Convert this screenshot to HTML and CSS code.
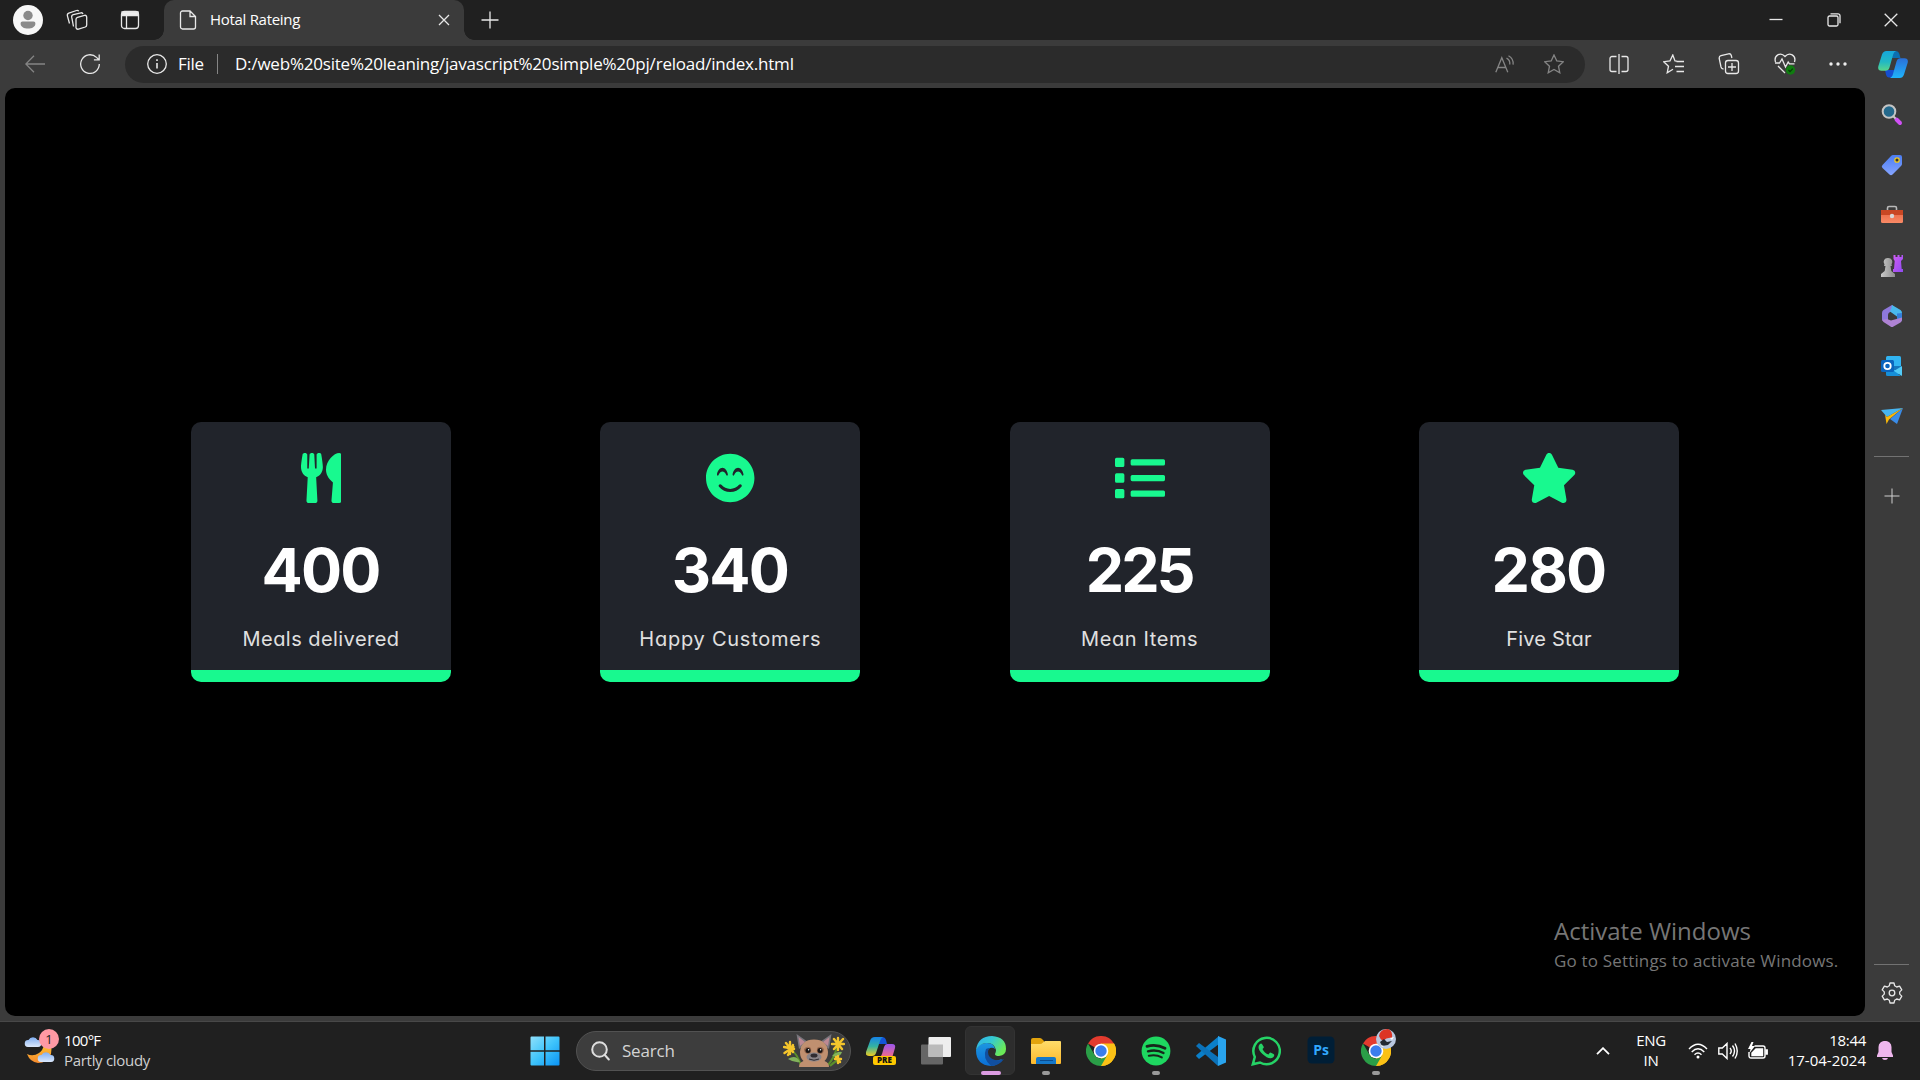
FILE: index.html
```html
<!DOCTYPE html>
<html lang="en">
<head>
<meta charset="utf-8">
<title>Hotal Rateing</title>
<link rel="stylesheet" href="styles.css">
</head>
<body>
<svg class="defs" width="0" height="0">
  <defs>
    <linearGradient id="g-win" x1="0" y1="0" x2="1" y2="1"><stop offset="0" stop-color="#8fe0fb"/><stop offset=".5" stop-color="#3fc4fb"/><stop offset="1" stop-color="#0a93f5"/></linearGradient>
    <linearGradient id="g-teal" x1="0" y1="0" x2="0" y2="1"><stop offset="0" stop-color="#16a6dc"/><stop offset=".55" stop-color="#22b8c4"/><stop offset="1" stop-color="#59d68a"/></linearGradient>
    <linearGradient id="g-blue" x1="0" y1="0" x2="0" y2="1"><stop offset="0" stop-color="#2a6fd8"/><stop offset="1" stop-color="#1fb4fb"/></linearGradient>
    <linearGradient id="g-pre1" x1="0" y1="0" x2="0" y2="1"><stop offset="0" stop-color="#1684e8"/><stop offset=".5" stop-color="#35b3a0"/><stop offset="1" stop-color="#f0cd20"/></linearGradient>
    <linearGradient id="g-pre2" x1="0" y1="0" x2="0" y2="1"><stop offset="0" stop-color="#9a55ee"/><stop offset="1" stop-color="#fb6e7c"/></linearGradient>
    <linearGradient id="g-tag" x1="0" y1="0" x2="0" y2="1"><stop offset="0" stop-color="#4b7df2"/><stop offset="1" stop-color="#86a5ff"/></linearGradient>
    <linearGradient id="g-box" x1="0" y1="0" x2="0" y2="1"><stop offset="0" stop-color="#e8623f"/><stop offset="1" stop-color="#f98a66"/></linearGradient>
    <linearGradient id="g-rook" x1="0" y1="0" x2="1" y2="1"><stop offset="0" stop-color="#d15cf5"/><stop offset="1" stop-color="#8f4cf0"/></linearGradient>
    <linearGradient id="g-pawn" x1="0" y1="0" x2="1" y2="0"><stop offset="0" stop-color="#c9c9c9"/><stop offset="1" stop-color="#8c8c8c"/></linearGradient>
    <linearGradient id="g-edge1" x1="0" y1="0" x2="1" y2=".5"><stop offset="0" stop-color="#2fb0ec"/><stop offset=".5" stop-color="#35c9d2"/><stop offset="1" stop-color="#6bea58"/></linearGradient>
    <linearGradient id="g-edge2" x1="0" y1="0" x2="0" y2="1"><stop offset="0" stop-color="#1c96e0"/><stop offset="1" stop-color="#0b6fd6"/></linearGradient>
    <linearGradient id="g-folder" x1="0" y1="0" x2="0" y2="1"><stop offset="0" stop-color="#ffdd6a"/><stop offset="1" stop-color="#fdb92c"/></linearGradient>
    <linearGradient id="g-moon" x1="0" y1="0" x2="0" y2="1"><stop offset="0" stop-color="#ffc030"/><stop offset="1" stop-color="#f58a2e"/></linearGradient>
    <linearGradient id="g-cloud" x1="0" y1="0" x2="0" y2="1"><stop offset="0" stop-color="#7faef2"/><stop offset="1" stop-color="#dce9fc"/></linearGradient>
    <g id="chrome">
      <path fill="#e33b2e" d="M15 15 2 7.500A15 15 0 0 1 28 7.500Z"/>
      <path fill="#fbc116" d="M15 15 28 7.500A15 15 0 0 1 15 30Z"/>
      <path fill="#fbc116" d="M15 7.500H28A15 15 0 0 1 15 30L21.500 18.800Z"/>
      <path fill="#2a9e47" d="M2 7.500A15 15 0 0 0 15 30L21.500 18.800A7.500 7.500 0 0 1 8.500 18.800Z"/>
      <circle cx="15" cy="15" r="7.300" fill="#fff"/><circle cx="15" cy="15" r="5.700" fill="#3b7ded"/>
    </g>
    <path id="cloud" d="M4 11a3.500 3.500 0 0 1 .5-7A5 5 0 0 1 13.500 4 3.500 3.500 0 0 1 14 11Z"/>
  </defs>
</svg>

<header class="tabbar">
  <svg class="avatar" viewBox="0 0 30 30" width="30" height="30"><circle cx="15" cy="15" r="15" fill="#f7f7f7"/><circle cx="15" cy="10.500" r="4.700" fill="#8a8a8a"/><path fill="#8a8a8a" d="M9.500 16.500h11c1.200 0 1.900.8 1.900 1.900 0 3.300-3.400 5.200-7.400 5.200s-7.400-1.900-7.400-5.200c0-1.100.7-1.900 1.900-1.900Z"/></svg>
  <svg class="line" viewBox="0 0 22 22" width="22" height="22"><path d="M11.500 8.300 18.500 6.300Q20.300 6 20.700 7.800V16Q20.700 17.500 19.300 18L12.500 20.200Q10.600 20.600 10 18.800V10.300Q10 8.800 11.500 8.300Z"/><path d="M7.500 17.500 5.700 8.200Q5.400 6.200 7.300 5.700L15 3.800Q16.500 3.500 17 5M3.500 14.500 1.400 6.800Q1 4.800 2.800 4.200L10.500 1.500Q12 1 12.700 2.300"/></svg>
  <svg class="line" viewBox="0 0 20 20" width="20" height="20"><rect x="1.500" y="1.500" width="17" height="17" rx="3"/><path d="M6.500 5v13"/><path fill="#eee" d="M2 2h16v3.500H2z"/></svg>
  <div class="tab">
    <svg class="line" viewBox="0 0 18 20" width="18" height="20"><path d="M3.500 1H11l5.500 5.500V17a2 2 0 0 1-2 2h-11a2 2 0 0 1-2-2V3a2 2 0 0 1 2-2ZM11 1v5.500h5.500"/></svg>
    <span class="tab-title">Hotal Rateing</span>
    <svg class="line" viewBox="0 0 12 12" width="12" height="12"><path d="m1 1 10 10M11 1 1 11"/></svg>
  </div>
  <svg class="line new-tab" viewBox="0 0 18 18" width="18" height="18"><path d="M9 .5v17M.5 9h17"/></svg>
  <div class="window-buttons">
    <svg class="line" viewBox="0 0 14 14" width="14" height="14"><path d="M.5 6.500h13"/></svg>
    <svg class="line" viewBox="0 0 14 14" width="14" height="14"><rect x="1" y="3" width="10" height="10" rx="1.500"/><path d="M3.500.8H11a2 2 0 0 1 2 2v7.500"/></svg>
    <svg class="line" viewBox="0 0 14 14" width="14" height="14"><path d="m.7.7 12.600 12.600M13.300.7.7 13.300"/></svg>
  </div>
</header>

<nav class="toolbar">
  <svg class="line dim" viewBox="0 0 20 18" width="20" height="18"><path d="M20 9H1M9 .8.8 9 9 17.200"/></svg>
  <svg class="line reload" viewBox="0 0 20 20" width="20" height="20"><path d="M19.300 10A9.300 9.300 0 1 1 16.500 3.400L19 5.700M19.200.5v5.300h-5.300"/></svg>
  <div class="address">
    <svg class="line" viewBox="0 0 20 20" width="20" height="20"><circle cx="10" cy="10" r="9.300"/><path stroke-width="1.600" d="M10 9v5.500M10 5.200v1.700"/></svg>
    <span class="scheme">File</span>
    <i class="pipe"></i>
    <span class="url">D:/web%20site%20leaning/javascript%20simple%20pj/reload/index.html</span>
    <svg class="line dim" viewBox="0 0 20 18" width="20" height="18"><path d="m.8 17.200 6-14.500 6 14.500M3 12.500h8M11.500 3.200q3.800 2 3.300 6.300M13.500.8q5.300 3 4.600 8.900"/></svg>
    <svg class="line dim" viewBox="0 0 20 20" width="20" height="20"><path d="m10 .9 2.800 6 6.500.8-4.800 4.500 1.300 6.600-5.800-3.300-5.800 3.300 1.300-6.600L.7 7.700l6.500-.8Z"/></svg>
  </div>
  <div class="tools">
    <svg class="line" viewBox="0 0 20 20" width="20" height="20"><path d="M10 0v20M7.500 2.500H3a2 2 0 0 0-2 2v11a2 2 0 0 0 2 2h4.500M12.500 2.500H17a2 2 0 0 1 2 2v11a2 2 0 0 1-2 2h-4.500"/></svg>
    <svg class="line" viewBox="0 0 22 20" width="22" height="20"><path d="m10 15.300-5.800 3.500 1.300-6.600L.7 7.700l6.300-.8L9.800 1 12 6.900l2 .3M13.500 7.500H21M12 12.500h9M13.500 17.500H21"/></svg>
    <svg class="line" viewBox="0 0 22 22" width="22" height="22"><rect x="7.500" y="7.500" width="13" height="13" rx="2.500"/><path d="M14 10v8M10 14h8M5.500 16q-2 0-2.500-2L1.200 5.500q-.3-2.200 1.800-2.800l7.500-1.900q2.200-.4 2.800 1.700l.6 2.500"/></svg>
    <svg class="line" viewBox="0 0 22 22" width="22" height="22"><path d="M1.500 9C-.5 2.500 6.500-1.500 11 3.500 15.500-1.500 22.500 2.500 20.500 9M1 10h4.500l2.500-4 3.500 8 2.700-5 1.300 1.800h5M4 13l7 7"/><circle cx="16.500" cy="17" r="4.700" fill="#107c10" stroke="none"/><path stroke="#063d06" d="m14.500 17 1.500 1.600 2.800-3"/></svg>
    <svg viewBox="0 0 18 4" width="18" height="4" fill="#eee"><circle cx="2" cy="2" r="1.700"/><circle cx="9" cy="2" r="1.700"/><circle cx="16" cy="2" r="1.700"/></svg>
  </div>
  <svg class="copilot" viewBox="0 0 30 27" width="30" height="27"><path fill="#154fd0" d="M7 19h10l-3 7.500h-3q-2.300 0-3-3Z"/><path fill="#0b6fb0" d="M13 0h5q2.500 0 3.300 2.800L22.500 7H13Z"/><path fill="url(#g-teal)" d="M8.500 0H18q-2 .8-2.700 3L11.500 16.500Q10.500 19.800 7.500 19.800H3.500Q-.8 19.800.4 15L4 3.500Q5.200 0 8.500 0Z"/><path fill="url(#g-blue)" d="M21.500 27H12q2-.8 2.700-3L18.500 10.500q1-3.300 4-3.300h4q4.300 0 3.100 4.800L26 23.500q-1.200 3.500-4.500 3.500Z"/></svg>
</nav>

<div class="browser-body">
  <main class="page">
    <div class="counters">
      <section class="card">
        <svg class="card-icon" viewBox="0 0 416 512"><path d="M207.900 15.200c.8 4.700 16.100 94.500 16.100 128.800 0 52.300-27.800 89.600-68.900 104.600L168 486.700c.7 13.700-10.200 25.300-24 25.300H80c-13.700 0-24.700-11.500-24-25.300l12.900-238.100C27.700 233.600 0 196.200 0 144 0 109.600 15.300 19.900 16.100 15.200 19.300-5.100 61.400-5.400 64 16.300v141.200c1.300 3.400 15.100 3.200 16 0 1.400-25.300 7.900-139.200 8-141.800 3.300-20.800 44.700-20.800 47.900 0 .2 2.700 6.600 116.500 8 141.800.9 3.200 14.800 3.400 16 0V16.300c2.600-21.600 44.800-21.400 48-1.100zm119.200 285.700l-15 185.100c-1.200 14 9.900 26 23.900 26h56c13.300 0 24-10.700 24-24V24c0-13.200-10.700-24-24-24-82.500 0-221.400 178.500-64.900 300.900z"/></svg>
        <strong>400</strong><span class="label meals">Meals delivered</span>
      </section>
      <section class="card">
        <svg class="card-icon" viewBox="0 0 496 512"><path d="M248 8C111 8 0 119 0 256s111 248 248 248 248-111 248-248S385 8 248 8zM112 223.400c3.300-42.100 32.200-71.400 56-71.400s52.700 29.300 56 71.400c.7 8.600-10.800 11.900-14.900 4.500l-9.500-17c-7.700-13.700-19.200-21.600-31.500-21.600s-23.800 7.900-31.500 21.600l-9.500 17c-4.300 7.400-15.800 4-15.100-4.500zm250.800 122.800C334.300 380.400 292.500 400 248 400s-86.300-19.600-114.800-53.800c-13.500-16.300 11-36.700 24.600-20.500 22.400 26.900 55.200 42.200 90.200 42.200s67.800-15.400 90.200-42.200c13.600-16.200 38.100 4.200 24.600 20.500zm6.200-118.300l-9.500-17c-7.700-13.700-19.200-21.600-31.500-21.600s-23.800 7.900-31.500 21.600l-9.500 17c-4.100 7.300-15.600 4-14.900-4.500 3.300-42.100 32.200-71.400 56-71.400s52.700 29.300 56 71.400c.6 8.600-11 11.900-15.100 4.500z"/></svg>
        <strong>340</strong><span class="label happy">Happy Customers</span>
      </section>
      <section class="card">
        <svg class="card-icon" viewBox="0 0 512 512"><path d="M80 368H16a16 16 0 0 0-16 16v64a16 16 0 0 0 16 16h64a16 16 0 0 0 16-16v-64a16 16 0 0 0-16-16zm0-320H16A16 16 0 0 0 0 64v64a16 16 0 0 0 16 16h64a16 16 0 0 0 16-16V64a16 16 0 0 0-16-16zm0 160H16a16 16 0 0 0-16 16v64a16 16 0 0 0 16 16h64a16 16 0 0 0 16-16v-64a16 16 0 0 0-16-16zm416 176H176a16 16 0 0 0-16 16v32a16 16 0 0 0 16 16h320a16 16 0 0 0 16-16v-32a16 16 0 0 0-16-16zm0-320H176a16 16 0 0 0-16 16v32a16 16 0 0 0 16 16h320a16 16 0 0 0 16-16V80a16 16 0 0 0-16-16zm0 160H176a16 16 0 0 0-16 16v32a16 16 0 0 0 16 16h320a16 16 0 0 0 16-16v-32a16 16 0 0 0-16-16z"/></svg>
        <strong class="n225">225</strong><span class="label mean">Mean Items</span>
      </section>
      <section class="card">
        <svg class="card-icon" viewBox="0 0 576 512"><path d="M259.300 17.800L194 150.200 47.900 171.500c-26.200 3.800-36.700 36.100-17.700 54.600l105.700 103-25 145.500c-4.500 26.300 23.200 46 46.400 33.700L288 439.600l130.700 68.700c23.200 12.200 50.900-7.400 46.400-33.700l-25-145.500 105.700-103c19-18.500 8.500-50.800-17.700-54.600L382 150.200 316.700 17.800c-11.700-23.600-45.600-23.900-57.400 0z"/></svg>
        <strong>280</strong><span class="label">Five Star</span>
      </section>
    </div>
    <div class="watermark"><span class="wm-title">Activate Windows</span><span class="wm-text">Go to Settings to activate Windows.</span></div>
  </main>
  <aside class="sidebar">
    <svg viewBox="0 0 22 22"><path stroke="#d050f5" stroke-width="4" stroke-linecap="round" d="m15.500 15.500 3.500 3.500"/><path stroke="#c8c8c8" stroke-width="2" d="m12 12 2.500 2.500"/><circle cx="8" cy="7.500" r="6.300" fill="#24698c" stroke="#c4c4c4" stroke-width="2"/></svg>
    <svg viewBox="0 0 22 22"><path fill="url(#g-tag)" d="M12 1h7q2 0 2 2v7q0 1-1 2l-8.500 8.500q-1.500 1.300-3 0L1.500 14Q0 12.500 1.500 11L10 2q1-1 2-1Z"/><circle cx="16" cy="6" r="2.200" fill="#333" stroke="#f0c91f" stroke-width="1.300"/></svg>
    <svg viewBox="0 0 22 22"><path fill="none" stroke="#b9b9b9" stroke-width="1.600" d="M6.500 7V4q0-1.500 1.500-1.500h6q1.500 0 1.500 1.500v3"/><rect y="6" width="22" height="13" rx="1.500" fill="url(#g-box)"/><path fill="#c94724" d="M0 6h22v5H0z"/><circle cx="11" cy="12" r="2.200" fill="#d8d8d8"/></svg>
    <svg viewBox="0 0 22 22"><path fill="url(#g-rook)" d="M12.500 0h2v2h2V0h2v2h2V0H22v4l-2 2 .7 8H22v3H12v-3h1l.7-8-1.200-2Z"/><path fill="url(#g-pawn)" d="M7 3a4 4 0 0 1 3.500 6.500L11 11H9.500l.8 5 3.700 3v3H0v-3l3.700-3 .8-5H3l.5-1.500A4 4 0 0 1 7 3Z"/></svg>
    <svg viewBox="0 0 22 22"><path fill="#8e78dc" d="M11 0 2.500 5Q1 6 1 8v7l6 3.500V10q0-2 2-3l6-3.500Z"/><path fill="#49b9ed" d="m11 0 8.500 5Q21 6 21 8v6.500l-5-3-7-5 1.500-4Z"/><path fill="#347fd9" d="M16 8.500 21 8v6q0 2-1.500 3L16 17.500Z"/><path fill="#af83d4" d="m1 15 5-1 4 1.500L21 12.500v2.500q0 1-1.500 2.500L12.500 21.500q-1.500 1-3 0L2.500 17Z"/></svg>
    <svg viewBox="0 0 22 22"><rect x="5" y="1" width="15" height="18" rx="1.500" fill="#31b4f2"/><path fill="#1577bd" d="M5 5h7v6h8v4H5z"/><path fill="#52cbf7" d="m21 11-8 5 8 5Z"/><path fill="#168fd8" d="M5 13v7q0 1 1.500 1H20l-7-5Z"/><rect y="5" width="13" height="12" rx="1.500" fill="#0a64bd"/><circle cx="6.500" cy="11" r="3.200" fill="none" stroke="#fff" stroke-width="1.800"/></svg>
    <svg viewBox="0 0 22 22"><path fill="#47b5f0" d="M0 5 22 3 6 12Z"/><path fill="#f9b80a" d="M6 12 22 3 8 14.500 5.500 19 4 9.500Z"/><path fill="#3a8ce8" d="m9 14 13-11-6 16Z"/></svg>
    <i class="rule"></i>
    <svg class="add" viewBox="0 0 16 16"><path stroke="#d0d0d0" d="M8 .5v15M.5 8h15"/></svg>
    <i class="rule settings-rule"></i>
    <svg class="settings line" viewBox="0 0 22 22"><path stroke-linejoin="round" d="m9 1-.7 2.800-2 1.200-2.900-.8-2.200 3.700 2.100 2v2.200l-2.100 2 2.200 3.700 2.900-.8 2 1.200L9 21h4l.7-2.800 2-1.200 2.900.8 2.200-3.700-2.100-2V9.900l2.100-2-2.200-3.700-2.900.8-2-1.200L13 1Z"/><circle cx="11" cy="11" r="2.800"/></svg>
  </aside>
</div>

<footer class="taskbar">
  <div class="weather">
    <div class="weather-icon">
      <svg viewBox="0 0 32 30" width="32" height="30"><path fill="url(#g-moon)" d="M27 9q1 4 0 9-4 9-13 9Q6 26 3 18q6 3 12-1 4-3 5-8Z"/><use href="#cloud" fill="url(#g-cloud)"/><use href="#cloud" x="13" y="15" fill="url(#g-cloud)"/></svg>
      <span class="badge">1</span>
    </div>
    <div class="weather-text"><span class="temp">100°F</span><span class="sky">Partly cloudy</span></div>
  </div>
  <div class="apps">
    <div class="app"><svg viewBox="0 0 30 30"><path fill="url(#g-win)" d="M1.500.5H14v13.700H.5V1.500q0-1 1-1ZM15.500.5h13q1 0 1 1v12.700h-14ZM.5 15.700H14v13.800H1.500q-1 0-1-1ZM15.500 15.700h14v12.800q0 1-1 1h-13Z"/></svg></div>
    <div class="search">
      <svg viewBox="0 0 19 20" width="19" height="20" fill="none" stroke="#dedede" stroke-width="2"><circle cx="8.500" cy="8.500" r="7.300" fill="#555"/><path stroke-linecap="round" d="m13.800 14 4 4.500"/></svg>
      <span class="search-text">Search</span>
      <svg class="critter" viewBox="0 0 62 34" width="62" height="34">
        <path fill="none" stroke="#5b8f2b" stroke-width="2" d="M7 15q8 5 11 17M54 12q-2 12-10 20M55 26q-4 2-8 6"/>
        <path fill="#82b25c" d="M5 25q8-5 12 3-6 1-12-3ZM49 22q5-5 10-4-2 6-10 4Z"/>
        <path stroke="#f4c52c" stroke-width="2.400" stroke-linecap="round" d="m1 13 10 2M3 9l7 9M1.500 19l9-6M7 8v12M5 21l5-10M49 10h12M51 5l8 10M60 5l-9 10M55 4v12M55 22v7M52 25h6M53 23l4 5"/>
        <path fill="#77757c" d="m16 15-2.500-15L25 8ZM37 8l11.500-8L46 15Z"/><path fill="#bd8994" d="m17 12-1.500-9L22 8ZM40 8l6.500-5L45 12Z"/>
        <path fill="#c09070" d="M17 18Q18 5.500 31 5.500T45 18q0 6-3.500 9 4.500 1.500 4.500 6H16q0-4.500 4.500-6-3.500-3-3.500-9Z"/>
        <path fill="#9a6a4f" d="M21 15q3-4 7-1 1 6-3 6-4-.5-4-5ZM34 14q4-3 7 1 0 5-4 5-4 0-3-6Z"/><circle cx="25" cy="16.500" r="2.500" fill="#181414"/><circle cx="37" cy="16.500" r="2.500" fill="#181414"/><circle cx="25.600" cy="15.700" r=".7" fill="#fff"/><circle cx="37.600" cy="15.700" r=".7" fill="#fff"/>
        <ellipse cx="31" cy="23" rx="7.500" ry="4.500" fill="#8a8488"/><ellipse cx="31" cy="21.500" rx="3.500" ry="2" fill="#302c31"/><path stroke="#302c31" fill="none" d="M26 25q5 2.500 10 0"/>
      </svg>
    </div>
    <div class="app"><svg class="pre" viewBox="0 0 30 30"><path fill="#1455d8" d="M12 1h4q3 0 4 3l1 4h-8Z"/><path fill="url(#g-pre1)" d="M9 1h8q-2 1-3 4l-4 12q-1 3-4 3H3q-4 0-3-4L4 5Q5 1 9 1Z"/><path fill="url(#g-pre2)" d="M21 8h5q4 0 3 4l-3 10H13q2-1 3-4l2-7q1-3 3-3Z"/><rect x="7" y="20" width="23" height="9" rx="2" fill="#fec800"/><text class="pre-text" x="18.500" y="27.300" text-anchor="middle">PRE</text></svg></div>
    <div class="app"><svg viewBox="0 0 30 30"><rect x="0" y="8.500" width="22" height="20" rx="1" fill="#666"/><rect x="7.500" y="1" width="22.500" height="20" rx="1" fill="#eee"/><path fill="#bbb" d="M7.500 8.500H22V21H7.500Z"/></svg></div>
    <div class="app active"><svg viewBox="0 0 30 30"><path fill="url(#g-edge2)" d="M0 14Q2 8 10 7q8-.5 9 6-2-2-5-1-5 3-1 10 4 5 13 1Q22 30 15 30 0 29 0 14Z"/><path fill="#114f9f" d="M10 13q-4 9 5 17 8 0 13-7-4 2-9 1-7-2-7-8 0-3 2-4-2 0-4 1Z"/><path fill="url(#g-edge1)" d="M0 14Q2 0 16 0q14 1 14 13 0 6-7 7-4 0-4-2 1-2 1-4Q18 6 10 7 3 8 0 14Z"/></svg></div>
    <div class="app running"><svg viewBox="0 0 30 30"><path fill="#e2a30d" d="M0 4q0-2 2-2h7q1.500 0 2.500 1.500L13 5v5H0Z"/><path fill="url(#g-folder)" d="M0 8h9q1.500 0 3-1.500L14 5h15q1 0 1 1v21q0 1-1 1H1q-1 0-1-1Z"/><path fill="#1578ca" d="M5 28v-5q0-2 2-2h16q2 0 2 2v5Z"/><path stroke="#0b4d91" d="M9 24.500h13"/></svg></div>
    <div class="app"><svg viewBox="0 0 30 30"><use href="#chrome"/></svg></div>
    <div class="app running"><svg viewBox="0 0 30 30"><circle cx="15" cy="15" r="14.400" fill="#1ed760"/><g fill="none" stroke="#17251b" stroke-linecap="round"><path stroke-width="2.800" d="M6 10.300q9.500-2.600 18 2"/><path stroke-width="2.400" d="M7 15.300q8.500-2.300 15.500 1.700"/><path stroke-width="2" d="M7.800 19.800q7-1.800 13 1.600"/></g></svg></div>
    <div class="app"><svg viewBox="0 0 30 30"><path fill="#0a7fc9" d="m0 20 3 3L23 8V0L.5 19Z"/><path fill="#0b72b9" d="m3 7-3 3 22 20V21Z"/><path fill="#29a4ee" d="M22 0 30 3.500v23L22 30Z"/></svg></div>
    <div class="app"><svg viewBox="0 0 30 30"><path fill="none" stroke="#25d366" stroke-width="2.500" d="m1.800 28.300 2-7.300A13.200 13.200 0 1 1 9 26.500Z"/><path fill="#25d366" d="M11 8q-1-1-2.500.5-3 4 3 9.500 7 6.500 11 3 1.500-2 0-3l-3-1.500q-1 0-2 2-4-1.200-6-5.500 2-1.500 1-2.500Z"/></svg></div>
    <div class="app"><svg viewBox="0 0 30 30"><rect x="1.500" y=".5" width="27" height="27" rx="4.500" fill="#001e36"/><text class="ps-text" x="15" y="18.500" text-anchor="middle">Ps</text></svg></div>
    <div class="app running"><svg viewBox="0 0 30 30"><use href="#chrome"/></svg>
      <svg class="profile" viewBox="0 0 20 20"><circle cx="10" cy="10" r="10" fill="#b9c7de"/><path fill="#dc3525" d="M3 7Q4 0 12 0q5 2 4 9-5-1-9 3-3-2-4-5Z"/><path fill="#222831" d="m4 13 4-3 3 3 5-1-4 4-6 1Z"/><path fill="#fff" d="m14 9 4-1-2 3ZM5 16l3 1-2 1Z"/></svg></div>
  </div>
  <div class="tray">
    <svg class="chev" viewBox="0 0 14 8" width="14" height="8"><path d="m1 7.200 6-6 6 6"/></svg>
    <div class="lang"><span>ENG</span><span>IN</span></div>
    <svg class="tray-line" viewBox="0 0 20 16" width="20" height="16"><path d="M1 6q9-9.500 18 0M3.700 9q6.300-6.300 12.600 0M6.500 11.700q3.500-3.200 7 0"/><circle cx="10" cy="14" r="1.500" fill="#fff" stroke="none"/></svg>
    <svg class="tray-line" viewBox="0 0 20 18" width="20" height="18"><path d="M.8 6h3.500L9 1.500v15L4.300 12H.8ZM12 6q2.500 3 0 6M14.500 3.500q4 5.500 0 11M17 1.500q4.500 7.500 0 15"/></svg>
    <svg class="tray-line" viewBox="0 0 20 18" width="20" height="18"><path d="M6.500 4H15a2 2 0 0 1 2 2v8a2 2 0 0 1-2 2H3a2 2 0 0 1-2-2v-4"/><path fill="#fff" d="M8 7h6.500v6.500H4V11ZM18 8h1.200v4H18Z"/><path fill="#fff" stroke="none" d="M3.500 0 0 7h2.500L1.500 11 7 4H4l1.500-4Z"/></svg>
    <div class="clock"><span class="time">18:44</span><span class="date">17-04-2024</span></div>
    <svg viewBox="0 0 16 20" width="16" height="20" fill="#efb7ee"><path d="M8 0a6 6 0 0 1 6.500 6v5l1.500 3.500V16H0v-1.500L1.500 11V6A6 6 0 0 1 8 0ZM5 17h6q-.5 2-3 2t-3-2Z"/></svg>
  </div>
</footer>
</body>
</html>
```

FILE: styles.css
```css
* { box-sizing: border-box; }
body {
  margin: 0;
  width: 1920px;
  height: 1080px;
  overflow: hidden;
  display: grid;
  grid-template-rows: 40px 48px 933px 59px;
  background: #3b3b3b;
  color: #fff;
  font-family: "Open Sans", "Noto Sans", sans-serif;
  white-space: nowrap;
}
svg { display: block; flex: none; }
.defs { position: absolute; }
.line { fill: none; stroke: #e8e8e8; stroke-width: 1.3; }
.dim { stroke: #858585; }

/* tab strip */
.tabbar { display: flex; align-items: center; background: #202020; padding-left: 13px; }
.tabbar > .line { margin-left: 23px; }
.tabbar > .line + .line { margin-left: 32px; }
.tab {
  position: relative;
  display: flex;
  align-items: center;
  width: 300px;
  height: 40px;
  margin-left: 24px;
  padding: 0 14px 0 15px;
  background: #3b3b3b;
  border-radius: 10px 10px 0 0;
}
.tab::before, .tab::after {
  content: "";
  position: absolute;
  bottom: 0;
  width: 10px;
  height: 10px;
}
.tab::before { left: -10px; background: radial-gradient(circle at 0 0, #202020 9.500px, #3b3b3b 10px); }
.tab::after { right: -10px; background: radial-gradient(circle at 100% 0, #202020 9.500px, #3b3b3b 10px); }
.tab-title { flex: 1; margin-left: 13px; padding-bottom: 2px; font-size: 15px; letter-spacing: -.3px; }
.tabbar > .new-tab { margin-left: 17px; }
.window-buttons { display: flex; gap: 43.500px; margin-left: auto; padding-right: 22px; }

/* toolbar */
.toolbar { display: flex; align-items: center; padding-left: 25px; }
.reload { margin-left: 35px; }
.address {
  display: flex;
  align-items: center;
  width: 1460px;
  height: 37px;
  margin-left: 25px;
  padding: 0 21px 0 22px;
  border-radius: 19px;
  background: #2b2b2b;
  font-size: 17px;
}
.scheme { width: 26px; margin-left: 11px; padding-bottom: 2px; letter-spacing: -.3px; }
.pipe { width: 1px; height: 20px; margin: 0 17px 0 13px; background: #858585; }
.url { flex: 1; padding-bottom: 2px; letter-spacing: -.21px; }
.address .dim + .dim { margin-left: 29px; }
.tools { display: flex; align-items: center; gap: 33.500px; margin-left: 24px; }
.copilot { margin-left: 31px; }

/* viewport and cards */
.browser-body { display: grid; grid-template-columns: 1860px 53px; padding-left: 5px; }
.page {
  position: relative;
  height: 928px;
  display: flex;
  align-items: center;
  justify-content: center;
  background: #000;
  border-radius: 10px;
}
.counters { display: flex; justify-content: space-between; width: 80%; }
.card {
  display: flex;
  flex-direction: column;
  align-items: center;
  width: 260px;
  height: 260px;
  padding-top: 31px;
  background: #21242b;
  border-bottom: 12px solid #18f98f;
  border-radius: 10px;
  font-family: Inter, sans-serif;
}
.card-icon { height: 50px; width: auto; fill: #18f98f; }
.card strong { margin-top: 35px; font-size: 61px; line-height: 64px; font-weight: 650; letter-spacing: -1.8px; padding-right: 1px; }
.card .n225 { letter-spacing: -3px; }
.label { margin-top: 22px; font-size: 20px; line-height: 30px; color: #e0e0e0; font-feature-settings: "cv11"; letter-spacing: .2px; }
.meals { letter-spacing: .45px; }
.happy { letter-spacing: .75px; }
.mean { letter-spacing: .6px; }
.watermark {
  position: absolute;
  right: 27px;
  bottom: 42px;
  width: 284px;
  display: flex;
  flex-direction: column;
  color: #767676;
}
.wm-title { font-size: 24px; line-height: 34px; }
.wm-text { font-size: 17px; line-height: 26px; letter-spacing: .17px; }

/* side panel */
.sidebar { display: flex; flex-direction: column; align-items: center; padding-top: 16px; }
.sidebar svg { width: 22px; height: 22px; margin-bottom: 28.200px; fill: none; }
.rule { width: 35px; height: 1px; margin-top: 1px; background: #727272; }
.sidebar .add { width: 16px; height: 16px; margin: 31px 0 0; }
.settings-rule { margin-top: auto; }
.sidebar .settings { margin: 17px 0 17px; }

/* taskbar */
.taskbar { display: grid; grid-template-columns: 517px 887px 516px; background: #202020; border-top: 1px solid #484848; padding-bottom: 2px; }
.weather { display: flex; align-items: center; padding-left: 24px; font-size: 15px; line-height: 20px; }
.weather-icon { position: relative; }
.badge {
  position: absolute;
  left: 15px;
  top: -7px;
  width: 20px;
  height: 20px;
  border-radius: 50%;
  background: #ff99a4;
  color: #222;
  font-size: 13px;
  text-align: center;
}
.weather-text { display: flex; flex-direction: column; margin-left: 8px; padding-bottom: 2px; }
.temp { letter-spacing: -.7px; }
.sky { color: #cfcfcf; letter-spacing: -.3px; }
.apps { display: flex; align-items: center; }
.app { position: relative; display: flex; align-items: center; justify-content: center; width: 55px; height: 58px; }
.app > svg { width: 30px; height: 30px; }
.active::before {
  content: "";
  position: absolute;
  inset: 4px 3px 5px 2px;
  border: 1px solid #333;
  border-radius: 6px;
  background: #2d2d2d;
}
.active > svg { position: relative; }
.active::after, .running::after {
  content: "";
  position: absolute;
  left: 50%;
  bottom: 5px;
  width: 8px;
  height: 4px;
  border-radius: 2px;
  background: #999;
  transform: translateX(-50%);
}
.active::after { width: 20px; background: #dc9ce2; }
.app > .profile { position: absolute; left: 28px; top: 7px; width: 20px; height: 20px; }
.search {
  display: flex;
  align-items: center;
  width: 275px;
  height: 40px;
  margin: 0 2px 0 4px;
  padding: 0 5px 0 14px;
  border: 1px solid #525252;
  border-radius: 20px;
  background: #3d3d3d;
}
.search-text { flex: 1; margin-left: 12px; padding-bottom: 1px; color: #d4d4d4; font-size: 17px; letter-spacing: -.2px; }
.pre-text { font-size: 8px; font-weight: 800; fill: #111; }
.ps-text { font-size: 14px; font-weight: 700; fill: #31a8ff; }
.tray { display: flex; align-items: center; justify-content: flex-end; padding-right: 27px; font-size: 15px; line-height: 20px; }
.chev { fill: none; stroke: #fff; stroke-width: 1.8; }
.lang, .clock { display: flex; flex-direction: column; padding-bottom: 2px; }
.lang { align-items: center; width: 30px; margin: 0 22px 0 26px; letter-spacing: -.3px; }
.tray-line { fill: none; stroke: #fff; stroke-width: 1.4; }
.tray-line + .tray-line { margin-left: 10px; }
.clock { align-items: flex-end; width: 78px; margin: 0 11px 0 20px; }
.time { letter-spacing: -.3px; }
```
